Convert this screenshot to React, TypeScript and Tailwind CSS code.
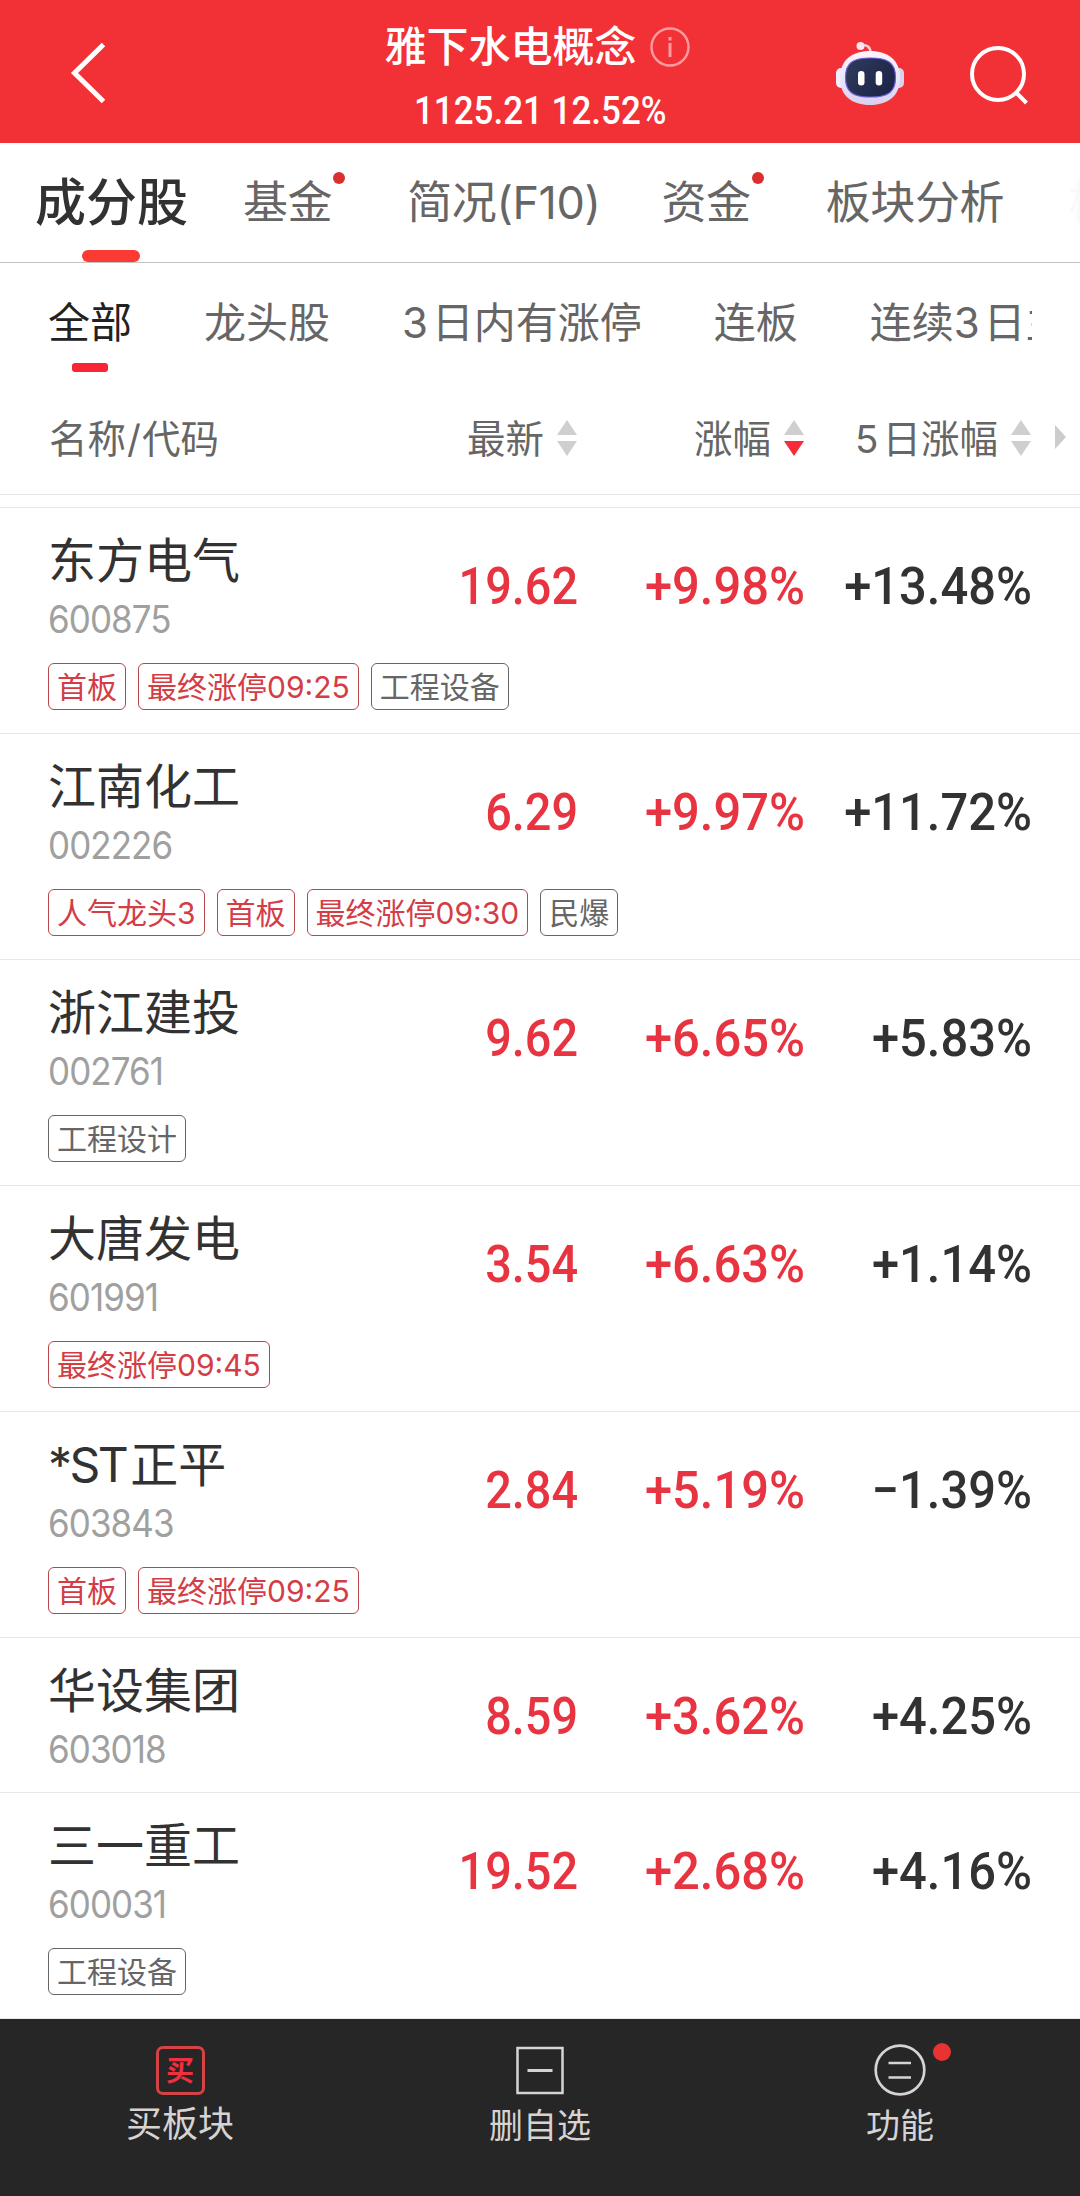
import clsx from "clsx";

type Tag = { label: string; tone: "hot" | "plain" };

type Stock = {
  prefix?: string;
  name: string;
  code: string;
  price: string;
  change: string;
  fiveDay: string;
  tags: Tag[];
};

const hot = (label: string): Tag => ({ label, tone: "hot" });
const plain = (label: string): Tag => ({ label, tone: "plain" });

const stocks: Stock[] = [
  { name: "东方电气", code: "600875", price: "19.62", change: "+9.98%", fiveDay: "+13.48%", tags: [hot("首板"), hot("最终涨停09:25"), plain("工程设备")] },
  { name: "江南化工", code: "002226", price: "6.29", change: "+9.97%", fiveDay: "+11.72%", tags: [hot("人气龙头3"), hot("首板"), hot("最终涨停09:30"), plain("民爆")] },
  { name: "浙江建投", code: "002761", price: "9.62", change: "+6.65%", fiveDay: "+5.83%", tags: [plain("工程设计")] },
  { name: "大唐发电", code: "601991", price: "3.54", change: "+6.63%", fiveDay: "+1.14%", tags: [hot("最终涨停09:45")] },
  { prefix: "*ST", name: "正平", code: "603843", price: "2.84", change: "+5.19%", fiveDay: "−1.39%", tags: [hot("首板"), hot("最终涨停09:25")] },
  { name: "华设集团", code: "603018", price: "8.59", change: "+3.62%", fiveDay: "+4.25%", tags: [] },
  { name: "三一重工", code: "600031", price: "19.52", change: "+2.68%", fiveDay: "+4.16%", tags: [plain("工程设备")] },
];

const tabs = [
  { label: "基金", dot: true },
  { label: "简况(F10)", dot: false },
  { label: "资金", dot: true },
  { label: "板块分析", dot: false },
];

const filters = ["龙头股", "3\u200a日内有涨停", "连板", "连续3\u200a日主"];

export default function App() {
  return (
    <div className="flex h-[2196px] w-[1080px] flex-col overflow-hidden bg-white font-['Inter','Noto_Sans_CJK_SC',sans-serif] text-[#323232]">
      <Header />
      <Tabs />
      <Filters />
      <ColumnHeads />
      <main className="min-h-0 flex-1 overflow-hidden border-t border-[#e8e8e8]">
        {stocks.map((stock) => (
          <StockRow key={stock.code} stock={stock} />
        ))}
      </main>
      <BottomBar />
    </div>
  );
}

function Header() {
  return (
    <header className="flex h-[143px] shrink-0 bg-[#f23136] text-white">
      <button className="flex w-[340px] items-center pt-[2px] pl-[68px]" aria-label="返回">
        <svg width="40" height="64" viewBox="0 0 40 64" fill="none" stroke="currentColor" strokeWidth="5">
          <path d="M35.500 3.500L6.500 32L35.500 60.500" />
        </svg>
      </button>
      <div className="flex w-[400px] flex-col items-center pt-[22px]">
        <div className="flex items-center gap-[13px] pr-[6px]">
          <h1 className="text-[42px] leading-[50px] font-medium">雅下水电概念</h1>
          <svg width="40" height="40" viewBox="0 0 40 40" fill="none" stroke="#ff9b9e" strokeWidth="2.400">
            <circle cx="20" cy="20" r="18.500" />
            <path d="M20 16V30M20 10V13.500" strokeWidth="3" />
          </svg>
        </div>
        <div className="mt-[17px] scale-x-92 font-[Roboto] text-[38px] leading-[44px] font-medium whitespace-nowrap">
          1125.21 12.52%
        </div>
      </div>
      <div className="flex flex-1 items-center pt-[5px] pl-[94px]">
        <RobotIcon />
        <svg className="mt-[2px] ml-[62px]" width="64" height="64" viewBox="0 0 64 64" fill="none" stroke="currentColor" strokeWidth="4">
          <circle cx="30" cy="31" r="26" />
          <path d="M48 49.500L58.500 60" />
        </svg>
      </div>
    </header>
  );
}

function RobotIcon() {
  return (
    <svg width="72" height="68" viewBox="0 0 72 68" fill="none">
      <defs>
        <linearGradient id="shell" x1="36" y1="11" x2="36" y2="65" gradientUnits="userSpaceOnUse">
          <stop stopColor="#fff4fa" />
          <stop offset="0.6" stopColor="#e6e2fb" />
          <stop offset="1" stopColor="#d8cfef" />
        </linearGradient>
        <linearGradient id="visor" x1="12" y1="20" x2="60" y2="56" gradientUnits="userSpaceOnUse">
          <stop stopColor="#303b5e" />
          <stop offset="1" stopColor="#1a2144" />
        </linearGradient>
      </defs>
      <path d="M27 5C33 4.500 36.500 7 36.500 13" stroke="#f8cfdc" strokeWidth="2.500" />
      <circle cx="26.500" cy="6" r="4" fill="#fbe6ef" />
      <rect x="2" y="28" width="12" height="20" rx="5" fill="#f3eefc" />
      <rect x="58" y="28" width="12" height="20" rx="5" fill="#d9d3f2" />
      <path d="M36 11C54 11 66 20 66 38C66 56 54 65 36 65C18 65 6 56 6 38C6 20 18 11 36 11Z" fill="url(#shell)" />
      <path
        d="M36.500 18C54 18 61.500 23 61.500 37.500C61.500 52 54 57 36.500 57C19 57 11.500 52 11.500 37.500C11.500 23 19 18 36.500 18Z"
        fill="url(#visor)"
        stroke="#6a5fd6"
        strokeWidth="1.200"
      />
      <rect x="24" y="31" width="6.500" height="14.500" rx="3.200" fill="#fff" />
      <rect x="41.700" y="31" width="6.500" height="14.500" rx="3.200" fill="#fff" />
    </svg>
  );
}

function Tabs() {
  return (
    <nav className="flex h-[120px] shrink-0 items-center overflow-hidden border-b border-[#c4c4c4] pl-[35px] text-[45px] leading-[60px] whitespace-nowrap text-[#666]">
      <div className="relative flex h-full items-center text-[51px] font-medium text-[#323232]">
        成分股
        <span className="absolute bottom-0 left-[47px] h-[12px] w-[58px] rounded-full bg-[#fb3a34]" />
      </div>
      <div className="ml-[55px] flex gap-[61px]">
        {tabs.map((tab) => (
          <div key={tab.label} className={clsx("relative tracking-[-0.400px]", tab.dot && "pr-[14px]")}>
            {tab.label}
            {tab.dot ? <span className="absolute -top-px right-px size-[12px] rounded-full bg-[#d9302f]" /> : null}
          </div>
        ))}
        <div className="pl-[3px] text-[#f9f9f9]">板</div>
      </div>
    </nav>
  );
}

function Filters() {
  return (
    <div className="flex h-[117px] w-[1032px] shrink-0 overflow-hidden pl-[48px] text-[42px] leading-[120px] whitespace-nowrap text-[#666]">
      <div className="relative text-[#222]">
        全部
        <span className="absolute bottom-[8px] left-[24px] h-[9px] w-[36px] rounded-[3px] bg-[#f92536]" />
      </div>
      <div className="ml-[72px] flex gap-[72px]">
        {filters.map((label) => (
          <span key={label}>{label}</span>
        ))}
      </div>
    </div>
  );
}

function ColumnHeads() {
  return (
    <div className="mb-[12px] flex h-[115px] shrink-0 items-center border-b border-[#e8e8e8] pl-[49px] text-[38.500px] leading-[48px] whitespace-nowrap text-[#666]">
      <div className="w-[328px] pt-[3px]">
        名称<span className="px-px">/</span>代码
      </div>
      <SortHead className="w-[200px]" label="最新" />
      <SortHead className="w-[227px]" label="涨幅" sorted />
      <SortHead className="w-[227px]" days="5" label="日涨幅" />
      <svg className="ml-[24px]" width="11" height="24" viewBox="0 0 11 24" fill="#ccc">
        <path d="M0 0L11 12L0 24Z" />
      </svg>
    </div>
  );
}

function SortHead({ label, days, sorted, className }: { label: string; days?: string; sorted?: boolean; className: string }) {
  return (
    <div className={clsx("flex items-center justify-end gap-[13px]", className)}>
      <span className="pt-[3px]">
        {days ? <span className="mr-[4px]">{days}</span> : null}
        {label}
      </span>
      <svg className="mt-px" width="20" height="36" viewBox="0 0 20 36" fill="#cfcfcf">
        <path d="M10 0L20 15H0Z" />
        <path d="M0 21H20L10 36Z" fill={sorted ? "#f72b39" : "#cfcfcf"} />
      </svg>
    </div>
  );
}

function StockRow({ stock }: { stock: Stock }) {
  return (
    <div className={clsx("border-b border-[#e8e8e8] pt-[24px] pl-[48px]", stock.tags.length ? "h-[226px]" : "h-[155px]")}>
      <div className="flex">
        <div className="w-[300px]">
          <div className="text-[48px] leading-[58px]">
            {stock.prefix ? <span className="mr-[4px] tracking-[-2.500px]">{stock.prefix}</span> : null}
            {stock.name}
          </div>
          <div className="mt-[7px] origin-left scale-x-92 text-[38px] leading-[44px] tracking-[-1px] text-[#a0a0a0]">{stock.code}</div>
        </div>
        <div className="flex pt-[25px] text-right font-[Roboto] text-[52px] leading-[60px] font-medium">
          <div className="w-[230px] origin-right scale-x-90 text-[#e83440]">{stock.price}</div>
          <div className="w-[227px] origin-right scale-x-94 text-[#e83440]">{stock.change}</div>
          <div className="w-[227px] origin-right scale-x-94">{stock.fiveDay}</div>
        </div>
      </div>
      <div className="mt-[22px] flex gap-[12px]">
        {stock.tags.map((tag) => (
          <span
            key={tag.label}
            className={clsx(
              "h-[47px] rounded-[6px] border px-[8px] text-[30px] leading-[46px]",
              tag.tone === "hot" ? "border-[#b8464c] text-[#d43c46]" : "border-[#666] text-[#666]",
            )}
          >
            {tag.label}
          </span>
        ))}
      </div>
    </div>
  );
}

function BottomBar() {
  return (
    <footer className="grid h-[177px] shrink-0 grid-cols-3 bg-[#262626] text-[34px] leading-[44px] text-[#d6d3d3]">
      <button className="flex flex-col items-center pt-[27px]">
        <span className="flex size-[49px] items-center justify-center rounded-[7px] border-3 border-[#d44444] text-[28px] leading-[30px] font-bold text-[#ee3040]">
          买
        </span>
        <span className="mt-[7px] text-[36px]">买板块</span>
      </button>
      <button className="flex flex-col items-center pt-[27px]">
        <svg width="50" height="49" viewBox="0 0 50 49" fill="none" stroke="currentColor" strokeWidth="2.500">
          <rect x="2.500" y="2" width="45" height="45" />
          <path d="M12.500 24.500H37.500" strokeWidth="3" />
        </svg>
        <span className="mt-[9px]">删自选</span>
      </button>
      <button className="flex flex-col items-center pt-[25px]">
        <span className="relative">
          <svg width="52" height="52" viewBox="0 0 52 52" fill="none" stroke="currentColor" strokeWidth="2.700">
            <circle cx="26" cy="26" r="24.300" />
            <path d="M14.500 19H37M14.500 33.500H37" />
          </svg>
          <span className="absolute -top-[1px] left-[59px] size-[18px] rounded-full bg-[#e83331]" />
        </span>
        <span className="mt-[8px]">功能</span>
      </button>
    </footer>
  );
}
